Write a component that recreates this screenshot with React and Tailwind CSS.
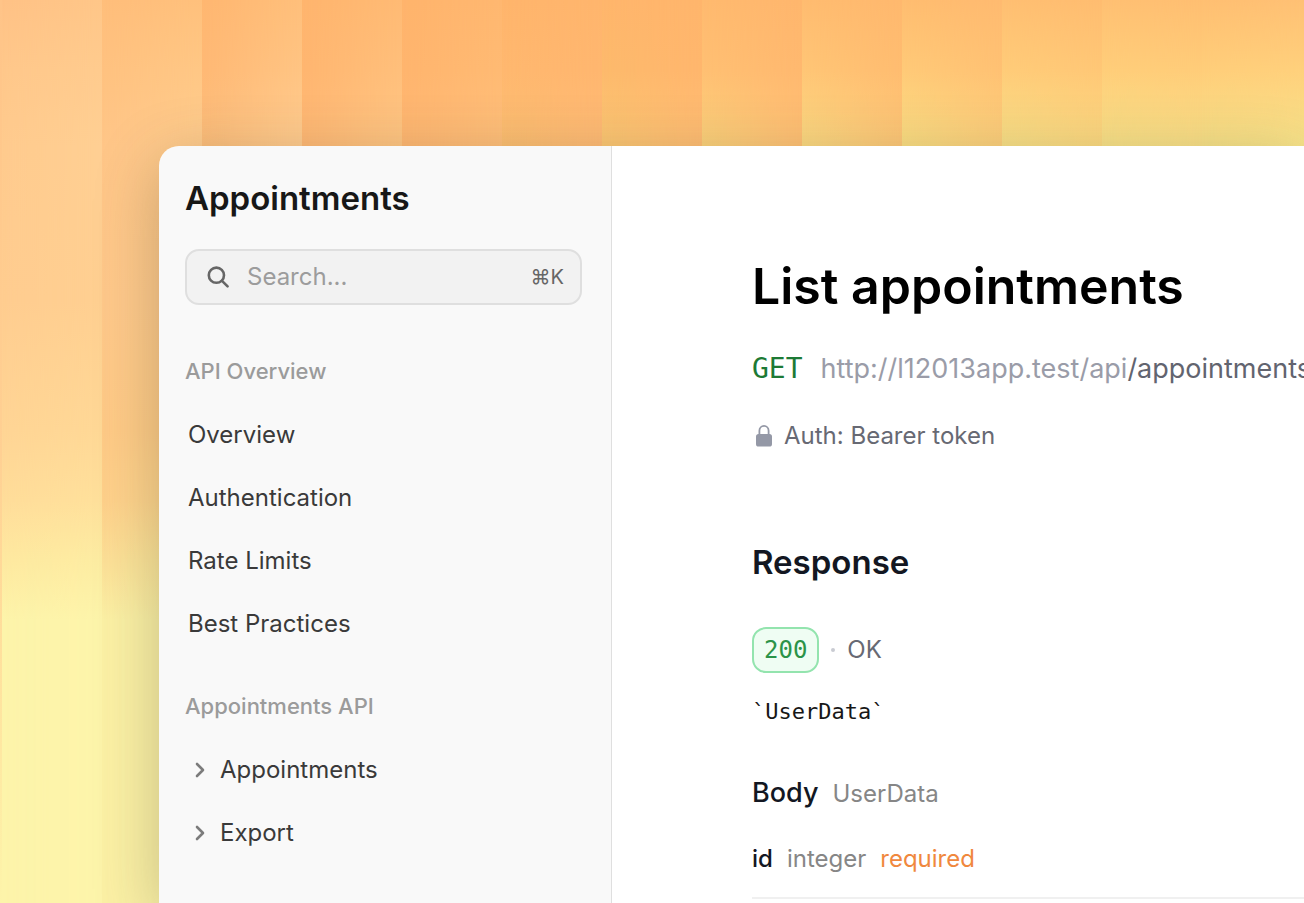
import React, { useState } from "react";
import { ChevronRight } from "lucide-react";

// Every stripe blends a left column of colours into a right one
const STRIPE_STOPS = [0, 70, 146, 300, 430, 500, 560, 620];

const STRIPES = [
  {
    left: ["#ffc286", "#ffc88b", "#ffcb8e", "#ffcd90", "#ffd595", "#ffdd9a", "#fee9a0", "#fdf4aa"],
    right: ["#ffc688", "#ffcb8e", "#ffcf93", "#ffcf91", "#ffd896", "#ffe09b", "#fdeca2", "#fdf4aa"],
  },
  {
    left: ["#ffbe7b", "#ffc280", "#ffc688", "#ffc98b", "#ffcb87", "#ffd18b", "#fde097", "#fcf1a5"],
    right: ["#ffc07c", "#ffc785", "#ffcc8e", "#ffcd8f", "#ffcf8a", "#ffdb92", "#fdec9f", "#fcf4aa"],
  },
  {
    left: ["#ffb771", "#ffb975", "#fcbe7c", "#fcbe7c", "#fcbe7c", "#fcbe7c", "#fcd27c", "#fcf1a5"],
    right: ["#ffbf7b", "#ffc483", "#ffcc90", "#ffcc90", "#ffcc90", "#ffcc90", "#fcd27c", "#fcf1a5"],
  },
  {
    left: ["#ffb56e", "#ffb670", "#ffb976", "#ffb976", "#ffb976", "#ffb976", "#ffb976", "#ffb976"],
    right: ["#ffba74", "#ffbf7b", "#ffc684", "#ffc684", "#ffc684", "#ffc684", "#ffc684", "#ffc684"],
  },
  {
    left: ["#ffb46c", "#ffb56e", "#ffb873", "#ffb873", "#ffb873", "#ffb873", "#ffb873", "#ffb873"],
    right: ["#ffb770", "#ffba73", "#ffbf7b", "#ffbf7b", "#ffbf7b", "#ffbf7b", "#ffbf7b", "#ffbf7b"],
  },
  {
    left: ["#ffb56c", "#ffb86f", "#fcbf72", "#fcbf72", "#fcbf72", "#fcbf72", "#fcbf72", "#fcbf72"],
    right: ["#ffb56d", "#ffb66f", "#ffbb76", "#ffbb76", "#ffbb76", "#ffbb76", "#ffbb76", "#ffbb76"],
  },
  {
    left: ["#ffb66c", "#fdba6c", "#fcc874", "#fcc874", "#fcc874", "#fcc874", "#fcc874", "#fcc874"],
    right: ["#ffb56c", "#ffb66d", "#ffbd74", "#ffbd74", "#ffbd74", "#ffbd74", "#ffbd74", "#ffbd74"],
  },
  {
    left: ["#ffba6f", "#ffc073", "#fbd27c", "#fbd27c", "#fbd27c", "#fbd27c", "#fbd27c", "#fbd27c"],
    right: ["#ffb66d", "#ffb86f", "#ffc075", "#ffc075", "#ffc075", "#ffc075", "#ffc075", "#ffc075"],
  },
  {
    left: ["#ffbc70", "#ffc676", "#fbda82", "#fbda82", "#fbda82", "#fbda82", "#fbda82", "#fbda82"],
    right: ["#ffb86e", "#ffbc70", "#fdc778", "#fdc778", "#fdc778", "#fdc778", "#fdc778", "#fdc778"],
  },
  {
    left: ["#ffbd70", "#ffca78", "#fadf84", "#fadf84", "#fadf84", "#fadf84", "#fadf84", "#fadf84"],
    right: ["#ffba70", "#ffc173", "#fccf7c", "#fccf7c", "#fccf7c", "#fccf7c", "#fccf7c", "#fccf7c"],
  },
  {
    left: ["#ffbf72", "#ffcc79", "#f8e188", "#f8e188", "#f8e188", "#f8e188", "#f8e188", "#f8e188"],
    right: ["#ffbc70", "#ffc776", "#fbd981", "#fbd981", "#fbd981", "#fbd981", "#fbd981", "#fbd981"],
  },
  {
    left: ["#ffc073", "#ffce7a", "#f8e289", "#f8e289", "#f8e289", "#f8e289", "#f8e289", "#f8e289"],
    right: ["#ffbe71", "#ffcc79", "#f8e088", "#f8e088", "#f8e088", "#f8e088", "#f8e088", "#f8e088"],
  },
  {
    left: ["#ffbf72", "#ffce7a", "#f7e289", "#f7e289", "#f7e289", "#f7e289", "#f7e289", "#f7e289"],
    right: ["#ffc074", "#ffd07c", "#f7e38a", "#f7e38a", "#f7e38a", "#f7e38a", "#f7e38a", "#f7e38a"],
  },
];

const overviewLinks = ["Overview", "Authentication", "Rate Limits", "Best Practices"];
const apiGroups = ["Appointments", "Export"];

const toGradient = (colors) =>
  `linear-gradient(to bottom, ${colors.map((c, i) => `${c} ${STRIPE_STOPS[i]}px`).join(", ")})`;

const Backdrop = () => (
  <div aria-hidden="true" className="absolute inset-0 flex overflow-hidden bg-[#fbd98a]">
    <div className="w-0.5 shrink-0 bg-linear-to-b from-[#ffc488] via-[#ffd093] to-[#fdf4aa]" />
    {STRIPES.map((stripe, index) => (
      <div
        key={index}
        className="w-[100px] shrink-0 last:grow"
        style={{ backgroundImage: toGradient(stripe.left) }}
      >
        <div
          className="h-full mask-l-from-0% mask-l-to-100%"
          style={{ backgroundImage: toGradient(stripe.right) }}
        />
      </div>
    ))}
  </div>
);

const SearchIcon = () => (
  <svg
    width="24"
    height="24"
    viewBox="0 0 24 24"
    fill="none"
    stroke="currentColor"
    strokeWidth="2.6"
    strokeLinecap="round"
    className="shrink-0 text-[#666666]"
  >
    <circle cx="9.4" cy="10.2" r="7.6" />
    <path d="M15 15.8L20.6 21.4" />
  </svg>
);

const LockIcon = () => (
  <svg width="16" height="24" viewBox="0 0 16 24" className="shrink-0 text-[#9498a6]">
    <path d="M3.4 11V6.8a4.6 4.9 0 0 1 9.2 0V11" fill="none" stroke="currentColor" strokeWidth="1.8" />
    <rect x="0" y="10" width="16" height="12.5" rx="2.6" fill="currentColor" />
  </svg>
);

const Sidebar = () => {
  const [search, setSearch] = useState("");
  const [openGroup, setOpenGroup] = useState(null);

  return (
    <aside className="w-[453px] shrink-0 border-r border-[#dfdfdf] bg-[#f9f9f9] pt-8 pr-[29px] pl-[26px]">
      <h2 className="text-[33px] leading-10 font-semibold text-[#171717]">Appointments</h2>

      <label className="mt-[31px] flex h-14 items-center gap-4 rounded-[14px] border-2 border-[#dfdfdf] bg-[#f2f2f2] pr-4 pl-5">
        <SearchIcon />
        <input
          type="text"
          aria-label="Search"
          placeholder="Search..."
          value={search}
          onChange={(e) => setSearch(e.target.value)}
          className="min-w-0 flex-1 bg-transparent text-2xl text-[#171717] outline-none placeholder:text-[#9c9c9c]"
        />
        <kbd className="font-['Inter','DejaVu_Sans',sans-serif] text-xl text-[#666666]">⌘K</kbd>
      </label>

      <nav className="pt-[35px] text-2xl text-[#3a3a3a]">
        <h3 className="flex h-[63px] items-center text-[22px] font-medium text-[#9b9b9b]">
          API Overview
        </h3>
        <ul className="pl-[3px]">
          {overviewLinks.map((link) => (
            <li key={link}>
              <a href="#" className="flex h-[63px] items-center">
                {link}
              </a>
            </li>
          ))}
        </ul>

        <h3 className="mt-5 flex h-[63px] items-center text-[22px] font-medium text-[#9b9b9b]">
          Appointments API
        </h3>
        <ul>
          {apiGroups.map((group) => (
            <li key={group}>
              <button
                type="button"
                aria-expanded={openGroup === group}
                onClick={() => setOpenGroup(openGroup === group ? null : group)}
                className="flex h-[63px] w-full items-center gap-2 pl-[3px]"
              >
                <ChevronRight size={24} strokeWidth={2.6} className="shrink-0 text-[#7c7c7c]" />
                {group}
              </button>
            </li>
          ))}
        </ul>
      </nav>
    </aside>
  );
};

const Endpoint = () => (
  <main className="min-w-0 flex-1 bg-white pt-28 pl-[140px]">
    <h1 className="text-[50px] leading-14 font-semibold whitespace-nowrap text-black">
      List appointments
    </h1>

    <div className="mt-[35px] flex h-10 items-center gap-[18px] whitespace-nowrap">
      <span className="font-['DejaVu_Sans_Mono',monospace] text-[28px] text-[#1d7a35]">GET</span>
      <span className="text-[27px] text-[#9a9ca8]">
        http://l12013app.test/api<span className="text-[#62646f]">/appointments</span>
      </span>
    </div>

    <div className="mt-[29px] flex h-9 items-center gap-3 pl-1 text-2xl text-[#676973]">
      <LockIcon />
      Auth: Bearer token
    </div>

    <h2 className="mt-[88px] text-[33px] leading-10 font-semibold text-[#131722]">Response</h2>

    <div className="mt-[45px] flex h-[46px] items-center text-2xl text-[#676973]">
      <span className="flex h-full items-center rounded-[14px] border-2 border-[#93e4ae] bg-[#effdf3] px-[10px] font-['DejaVu_Sans_Mono',monospace] text-[#2b9348]">
        200
      </span>
      <span className="mx-3 size-1 rounded-full bg-[#c9cbd2]" />
      OK
    </div>

    <p className="mt-[21px] font-['DejaVu_Sans_Mono',monospace] text-[22px] leading-9 text-[#171717]">
      `UserData`
    </p>

    <div className="mt-[43px] flex h-10 items-baseline gap-[14px] text-2xl text-[#868686]">
      <h3 className="text-[27px] leading-10 font-medium text-[#131722]">Body</h3>
      UserData
    </div>

    <div className="mt-[26px] flex h-[60px] items-start gap-[14px] border-b-2 border-[#f0f0f0] pt-1 text-2xl">
      <span className="font-medium text-[#131722]">id</span>
      <span className="text-[#868686]">integer</span>
      <span className="text-[#f0883e]">required</span>
    </div>
  </main>
);

const App = () => {
  return (
    <div className="relative flex min-h-screen overflow-hidden pt-[146px] pl-[159px] font-['Inter',sans-serif]">
      <Backdrop />
      <div className="relative flex min-w-0 flex-1 rounded-tl-[20px] shadow-[0_16px_64px_rgba(70,60,30,0.3)] *:first:rounded-tl-[20px]">
        <Sidebar />
        <Endpoint />
      </div>
    </div>
  );
};

export default App;
